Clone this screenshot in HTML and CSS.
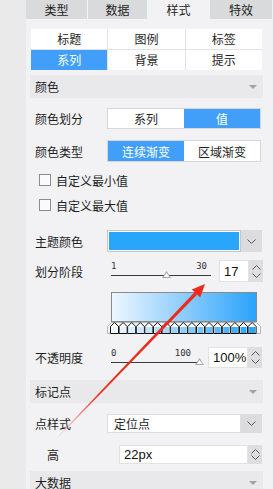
FILE: index.html
```html
<!DOCTYPE html>
<html lang="zh">
<head>
    <meta charset="UTF-8">
    <meta name="viewport" content="width=device-width, initial-scale=1.0">
    <title>样式设置</title>
    <link rel="stylesheet" href="styles.css">
</head>
<body>
    <div class="app">
        <div class="strip"></div>
        <div class="panel">
            <div class="tabs">
                <div class="tab">类型</div>
                <div class="tab sep">数据</div>
                <div class="tab active">样式</div>
                <div class="tab">特效</div>
            </div>

            <div class="content">
                <div class="subtabs">
                    <div class="sub">标题</div>
                    <div class="sub">图例</div>
                    <div class="sub">标签</div>
                    <div class="sub on">系列</div>
                    <div class="sub">背景</div>
                    <div class="sub">提示</div>
                </div>

                <div class="section">颜色<span class="caret"></span></div>

                <div class="row r-seg1">
                    <div class="label">颜色划分</div>
                    <div class="seg">
                        <div>系列</div>
                        <div class="on">值</div>
                    </div>
                </div>

                <div class="row r-seg2">
                    <div class="label">颜色类型</div>
                    <div class="seg">
                        <div class="on">连续渐变</div>
                        <div>区域渐变</div>
                    </div>
                </div>

                <div class="row check r-chk1"><span class="box"></span>自定义最小值</div>
                <div class="row check r-chk2"><span class="box"></span>自定义最大值</div>

                <div class="row r-theme">
                    <div class="label">主题颜色</div>
                    <div class="picker">
                        <div class="swatch"><div class="fill"></div></div>
                        <div class="dd">
                            <svg width="9" height="5" viewBox="0 0 9 5"><path d="M0.5 0.5 L4.5 4.5 L8.5 0.5" fill="none" stroke="#555" stroke-width="1"/></svg>
                        </div>
                    </div>
                </div>

                <div class="row r-stage">
                    <div class="label">划分阶段</div>
                    <div class="slider s1">
                        <div class="nums"><span>1</span><span>30</span></div>
                        <div class="track"><span class="thumb" style="left:55%"></span></div>
                    </div>
                    <div class="spin sp1">
                        <div class="val">17</div>
                        <div class="btns">
                            <svg width="9" height="5" viewBox="0 0 9 5"><path d="M0.5 4.5 L4.5 0.5 L8.5 4.5" fill="none" stroke="#555"/></svg>
                            <svg width="9" height="5" viewBox="0 0 9 5"><path d="M0.5 0.5 L4.5 4.5 L8.5 0.5" fill="none" stroke="#555"/></svg>
                        </div>
                    </div>
                </div>

                <div class="gradient"></div>
                <svg class="stops" width="154" height="12" viewBox="0 0 154 12">
                    <defs>
                        <path id="mk" d="M-4 4.5 L0 0.5 L4 4.5 L4 11.5 L-4 11.5 Z" fill="#fff" stroke="#111" stroke-width="1"/>
                    </defs>
                    <path d="M4.5 0.5 L149.5 0.5 L153.5 4.5 L153.5 11.5 L0.5 11.5 L0.5 4.5 Z" fill="#f4f4f4" stroke="#b5b5b5"/>
                    <g transform="translate(7.5 0)">
                        <use href="#mk" x="0"/><rect x="-3" y="5" width="6" height="6" fill="#f0f8ff"/>
                        <use href="#mk" x="8.6"/><rect x="5.6" y="5" width="6" height="6" fill="#e4f3ff"/>
                        <use href="#mk" x="17.2"/><rect x="14.2" y="5" width="6" height="6" fill="#d7eefe"/>
                        <use href="#mk" x="25.8"/><rect x="22.8" y="5" width="6" height="6" fill="#cbe8fe"/>
                        <use href="#mk" x="34.4"/><rect x="31.4" y="5" width="6" height="6" fill="#bfe3fe"/>
                        <use href="#mk" x="43"/><rect x="40" y="5" width="6" height="6" fill="#b2defe"/>
                        <use href="#mk" x="51.6"/><rect x="48.6" y="5" width="6" height="6" fill="#a6d8fe"/>
                        <use href="#mk" x="60.2"/><rect x="57.2" y="5" width="6" height="6" fill="#99d3fd"/>
                        <use href="#mk" x="68.8"/><rect x="65.8" y="5" width="6" height="6" fill="#8dcefd"/>
                        <use href="#mk" x="77.4"/><rect x="74.4" y="5" width="6" height="6" fill="#81c9fd"/>
                        <use href="#mk" x="86"/><rect x="83" y="5" width="6" height="6" fill="#74c4fd"/>
                        <use href="#mk" x="94.6"/><rect x="91.6" y="5" width="6" height="6" fill="#68befc"/>
                        <use href="#mk" x="103.2"/><rect x="100.2" y="5" width="6" height="6" fill="#5cb9fc"/>
                        <use href="#mk" x="111.8"/><rect x="108.8" y="5" width="6" height="6" fill="#4fb4fc"/>
                        <use href="#mk" x="120.4"/><rect x="117.4" y="5" width="6" height="6" fill="#43aefc"/>
                        <use href="#mk" x="129"/><rect x="126" y="5" width="6" height="6" fill="#36a9fb"/>
                        <use href="#mk" x="137.6"/><rect x="134.6" y="5" width="6" height="6" fill="#2aa4fb"/>
                    </g>
                </svg>

                <div class="row r-opacity">
                    <div class="label">不透明度</div>
                    <div class="slider s2">
                        <div class="nums"><span>0</span><span>100</span></div>
                        <div class="track"><span class="thumb" style="left:100%"></span></div>
                    </div>
                    <div class="spin sp2">
                        <div class="val">100%</div>
                        <div class="btns">
                            <svg width="9" height="5" viewBox="0 0 9 5"><path d="M0.5 4.5 L4.5 0.5 L8.5 4.5" fill="none" stroke="#555"/></svg>
                            <svg width="9" height="5" viewBox="0 0 9 5"><path d="M0.5 0.5 L4.5 4.5 L8.5 0.5" fill="none" stroke="#555"/></svg>
                        </div>
                    </div>
                </div>

                <div class="section s-mark">标记点<span class="caret"></span></div>

                <div class="row r-style">
                    <div class="label">点样式</div>
                    <div class="picker">
                        <div class="select">定位点</div>
                        <div class="dd">
                            <svg width="9" height="5" viewBox="0 0 9 5"><path d="M0.5 0.5 L4.5 4.5 L8.5 0.5" fill="none" stroke="#555" stroke-width="1"/></svg>
                        </div>
                    </div>
                </div>

                <div class="row r-height">
                    <div class="label sub-label">高</div>
                    <div class="spin sp3">
                        <div class="val">22px</div>
                        <div class="btns">
                            <svg width="9" height="5" viewBox="0 0 9 5"><path d="M0.5 4.5 L4.5 0.5 L8.5 4.5" fill="none" stroke="#555"/></svg>
                            <svg width="9" height="5" viewBox="0 0 9 5"><path d="M0.5 0.5 L4.5 4.5 L8.5 0.5" fill="none" stroke="#555"/></svg>
                        </div>
                    </div>
                </div>

                <div class="section s-big">大数据<span class="caret"></span></div>
            </div>
        </div>
    </div>

    <!-- annotation arrow drawn over the panel -->
    <svg class="arrow" width="273" height="489" viewBox="0 0 273 489">
        <defs>
            <linearGradient id="fade" gradientUnits="userSpaceOnUse" x1="55" y1="440" x2="205" y2="284">
                <stop offset="0" stop-color="#f23a2c" stop-opacity="0"/>
                <stop offset="0.12" stop-color="#f23a2c" stop-opacity="0.45"/>
                <stop offset="0.3" stop-color="#ee2a1e" stop-opacity="1"/>
                <stop offset="1" stop-color="#ee2a1e" stop-opacity="1"/>
            </linearGradient>
        </defs>
        <polygon points="55.3,440.3 54.7,439.7 194.8,292.0 197.2,294.4" fill="url(#fade)"/>
        <polygon points="205,284 200.2,297.4 191.8,289.4" fill="#ee2a1e"/>
    </svg>
</body>
</html>
```

FILE: styles.css
```css
* {
    box-sizing: border-box;
}
html, body {
    margin: 0;
    height: 489px;
    overflow: hidden;
}
body {
    position: relative;
    font-family: "Noto Sans CJK SC", "Noto Sans", sans-serif;
    font-size: 12px;
    color: #1e1e1e;
    background: #eaeaea;
}
.app {
    display: flex;
    height: 100%;
}
.strip {
    width: 27px;
    background: #eaeaea;
}
.panel {
    flex: 1;
    background: #f2f2f4;
}

/* top tabs */
.tabs {
    display: grid;
    grid-template-columns: 61px 60px 63px 62px;
    height: 19px;
}
.tab {
    background: #d9dadc;
    text-align: center;
    line-height: 19px;
}
.tab.sep {
    border-left: 1px solid #f4f4f4;
}
.tab.active {
    background: #f2f2f4;
}

.content {
    padding: 0 10px 0 4px;
}

/* sub tabs */
.subtabs {
    display: grid;
    grid-template-columns: repeat(3, 1fr);
    grid-auto-rows: 20px;
    gap: 1px;
    margin: 10px 1px 0;
    background: #e2e2e2;
}
.sub {
    background: #fff;
    text-align: center;
    line-height: 20px;
}
.sub.on {
    background: #419ff9;
    color: #fff;
}

/* collapsible headers */
.section {
    display: flex;
    justify-content: space-between;
    align-items: center;
    height: 23px;
    margin-top: 5px;
    padding: 0 6px 0 5px;
    background: #e9e9eb;
}
.caret {
    width: 0;
    height: 0;
    border-left: 4px solid transparent;
    border-right: 4px solid transparent;
    border-top: 4px solid #a2a2a2;
}
.s-mark {
    margin-top: 12px;
}
.s-big {
    margin-top: 7px;
}

/* rows */
.row {
    display: flex;
    align-items: center;
}
.label {
    width: 77px;
    padding-left: 5px;
    flex-shrink: 0;
}
.r-seg1 {
    margin-top: 10px;
    height: 21px;
}
.r-seg2 {
    margin-top: 11px;
    height: 22px;
}
.seg {
    display: grid;
    grid-template-columns: 1fr 1fr;
    width: 154px;
    height: 100%;
    border: 1px solid #d7d7d7;
    background: #fff;
}
.seg div {
    display: flex;
    align-items: center;
    justify-content: center;
}
.seg .on {
    background: #419ff9;
    color: #fff;
}

.check {
    height: 22px;
    padding-left: 9px;
}
.r-chk1 {
    margin-top: 7px;
}
.r-chk2 {
    margin-top: 3px;
}
.box {
    width: 12px;
    height: 12px;
    margin-right: 5px;
    border: 1px solid #8c8c8c;
    background: #fafafa;
}

/* colour picker / select */
.r-theme {
    margin-top: 14px;
    height: 22px;
}
.picker {
    display: flex;
    width: 155px;
    height: 100%;
}
.swatch {
    flex: 1;
    padding: 1px;
    border: 1px solid #c6c6c6;
    background: #fff;
}
.fill {
    height: 100%;
    background: #29a5fc;
}
.dd {
    display: flex;
    align-items: center;
    justify-content: center;
    width: 21px;
    background: #dcdcde;
}
.select {
    flex: 1;
    padding-left: 6px;
    border: 1px solid #dedede;
    background: #fff;
    line-height: 17px;
}

/* sliders */
.r-stage {
    margin-top: 8px;
    height: 22px;
}
.slider {
    align-self: stretch;
    margin-left: 4px;
}
.s1 {
    width: 100px;
}
.s2 {
    width: 88px;
}
.nums {
    display: flex;
    justify-content: space-between;
    margin-top: 1px;
    font-family: "DejaVu Sans Mono", monospace;
    font-size: 9px;
    line-height: 10px;
    color: #333;
}
.s1 .nums {
    padding-right: 4px;
}
.s2 .nums {
    padding-right: 8px;
}
.track {
    position: relative;
    height: 1px;
    margin-top: 4px;
    background: #3a3a3a;
}
.thumb {
    position: absolute;
    top: -4px;
    width: 9px;
    height: 7px;
    margin-left: -4px;
    background: #a8a8a8;
    clip-path: polygon(50% 0, 100% 100%, 0 100%);
}
.thumb::after {
    content: "";
    position: absolute;
    left: 1.5px;
    top: 2px;
    width: 6px;
    height: 4px;
    background: #fff;
    clip-path: polygon(50% 0, 100% 100%, 0 100%);
}

/* spin inputs */
.spin {
    display: flex;
    height: 100%;
}
.sp1 {
    margin-left: 8px;
}
.sp2 {
    margin-left: 9px;
}
.val {
    padding-left: 4px;
    border: 1px solid #e2e2e2;
    background: #fff;
    font-family: "Liberation Sans", Arial, sans-serif;
    font-size: 13px;
    display: flex;
    align-items: center;
    color: #111;
}
.sp1 .val {
    width: 30px;
}
.sp2 .val {
    width: 40px;
}
.sp3 .val {
    width: 129px;
}
.btns {
    display: flex;
    flex-direction: column;
    justify-content: space-around;
    align-items: center;
    width: 14px;
    padding: 3px 0;
    background: #dedee0;
}

.gradient {
    width: 146px;
    height: 30px;
    margin: 10px 0 0 81px;
    border: 1px solid #8a8a8a;
    background: linear-gradient(to right, #eef7ff, #2aa3fb);
}
.stops {
    display: block;
    margin-left: 77px;
}

.r-opacity {
    margin-top: 13px;
    height: 21px;
}

.r-style {
    margin-top: 11px;
    height: 19px;
}
.r-height {
    margin-top: 12px;
    height: 19px;
}
.sub-label {
    width: 89px;
    padding-left: 17px;
}

.arrow {
    position: absolute;
    left: 0;
    top: 0;
    pointer-events: none;
}
```
